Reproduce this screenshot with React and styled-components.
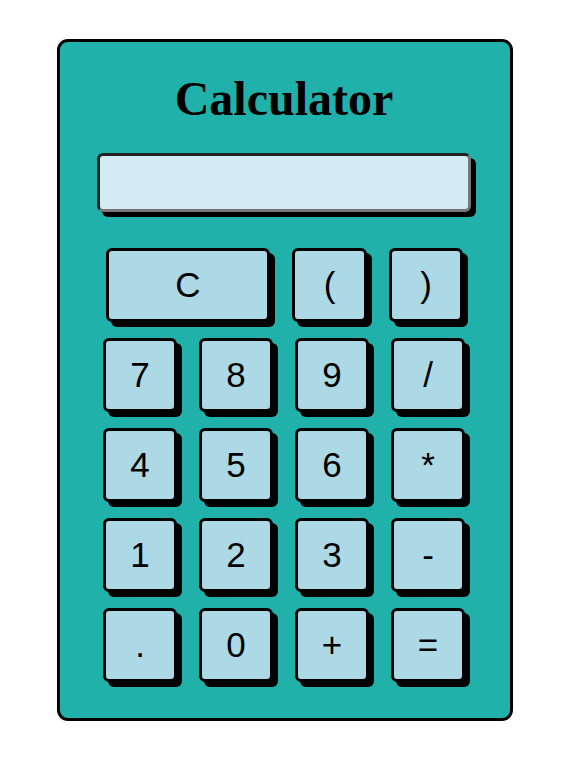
import React from "react";
import styled, { createGlobalStyle } from "styled-components";

const GlobalStyle = createGlobalStyle`
  body {
    margin: 0;
    background: #ffffff;
    font-family: "Liberation Sans", Arial, sans-serif;
  }
`;

const Card = styled.div`
  box-sizing: border-box;
  width: 456px;
  height: 682px;
  margin: 39px 0 0 57px;
  padding: 33px 39px 0 37px;
  background: #20b2aa;
  border: 3px solid #000;
  border-radius: 11px;
  display: flex;
  flex-direction: column;
`;

const Title = styled.h1`
  margin: 0;
  font-family: "Liberation Serif", "Times New Roman", serif;
  font-size: 48px;
  line-height: 48px;
  font-weight: bold;
  text-align: center;
  color: #000;
`;

const Display = styled.div`
  box-sizing: border-box;
  margin-top: 30px;
  height: 59px;
  background: #d5ebf3;
  border: 3px solid;
  border-color: #222 #777 #777 #222;
  border-radius: 6px;
  box-shadow: 5px 5px 0 #000;
`;

const Keys = styled.div`
  margin-top: 36px;
  padding: 0 6px;
  display: flex;
  flex-direction: column;
  gap: 16px;
`;

const TopRow = styled.div`
  display: flex;
  gap: 22px;
  padding-left: 3px;
`;

const Grid = styled.div`
  display: grid;
  grid-template-columns: repeat(4, 74px);
  grid-auto-rows: 74px;
  column-gap: 22px;
  row-gap: 16px;
`;

const Key = styled.button`
  box-sizing: border-box;
  width: ${(p) => p.$w || 74}px;
  height: 74px;
  padding: 0;
  background: #add8e6;
  border: 3px solid #000;
  border-radius: 6px;
  box-shadow: 5px 5px 0 #000;
  font-family: "Liberation Sans", Arial, sans-serif;
  font-size: 35px;
  color: #000;
  display: flex;
  align-items: center;
  justify-content: center;
  cursor: pointer;
`;

const rows = [
  ["7", "8", "9", "/"],
  ["4", "5", "6", "*"],
  ["1", "2", "3", "-"],
  [".", "0", "+", "="],
];

export default function App() {
  return (
    <>
      <GlobalStyle />
      <Card>
        <Title>Calculator</Title>
        <Display />
        <Keys>
          <TopRow>
            <Key $w={164}>C</Key>
            <Key $w={75}>(</Key>
            <Key $w={74}>)</Key>
          </TopRow>
          <Grid>
            {rows.flat().map((k) => (
              <Key key={k}>{k}</Key>
            ))}
          </Grid>
        </Keys>
      </Card>
    </>
  );
}
